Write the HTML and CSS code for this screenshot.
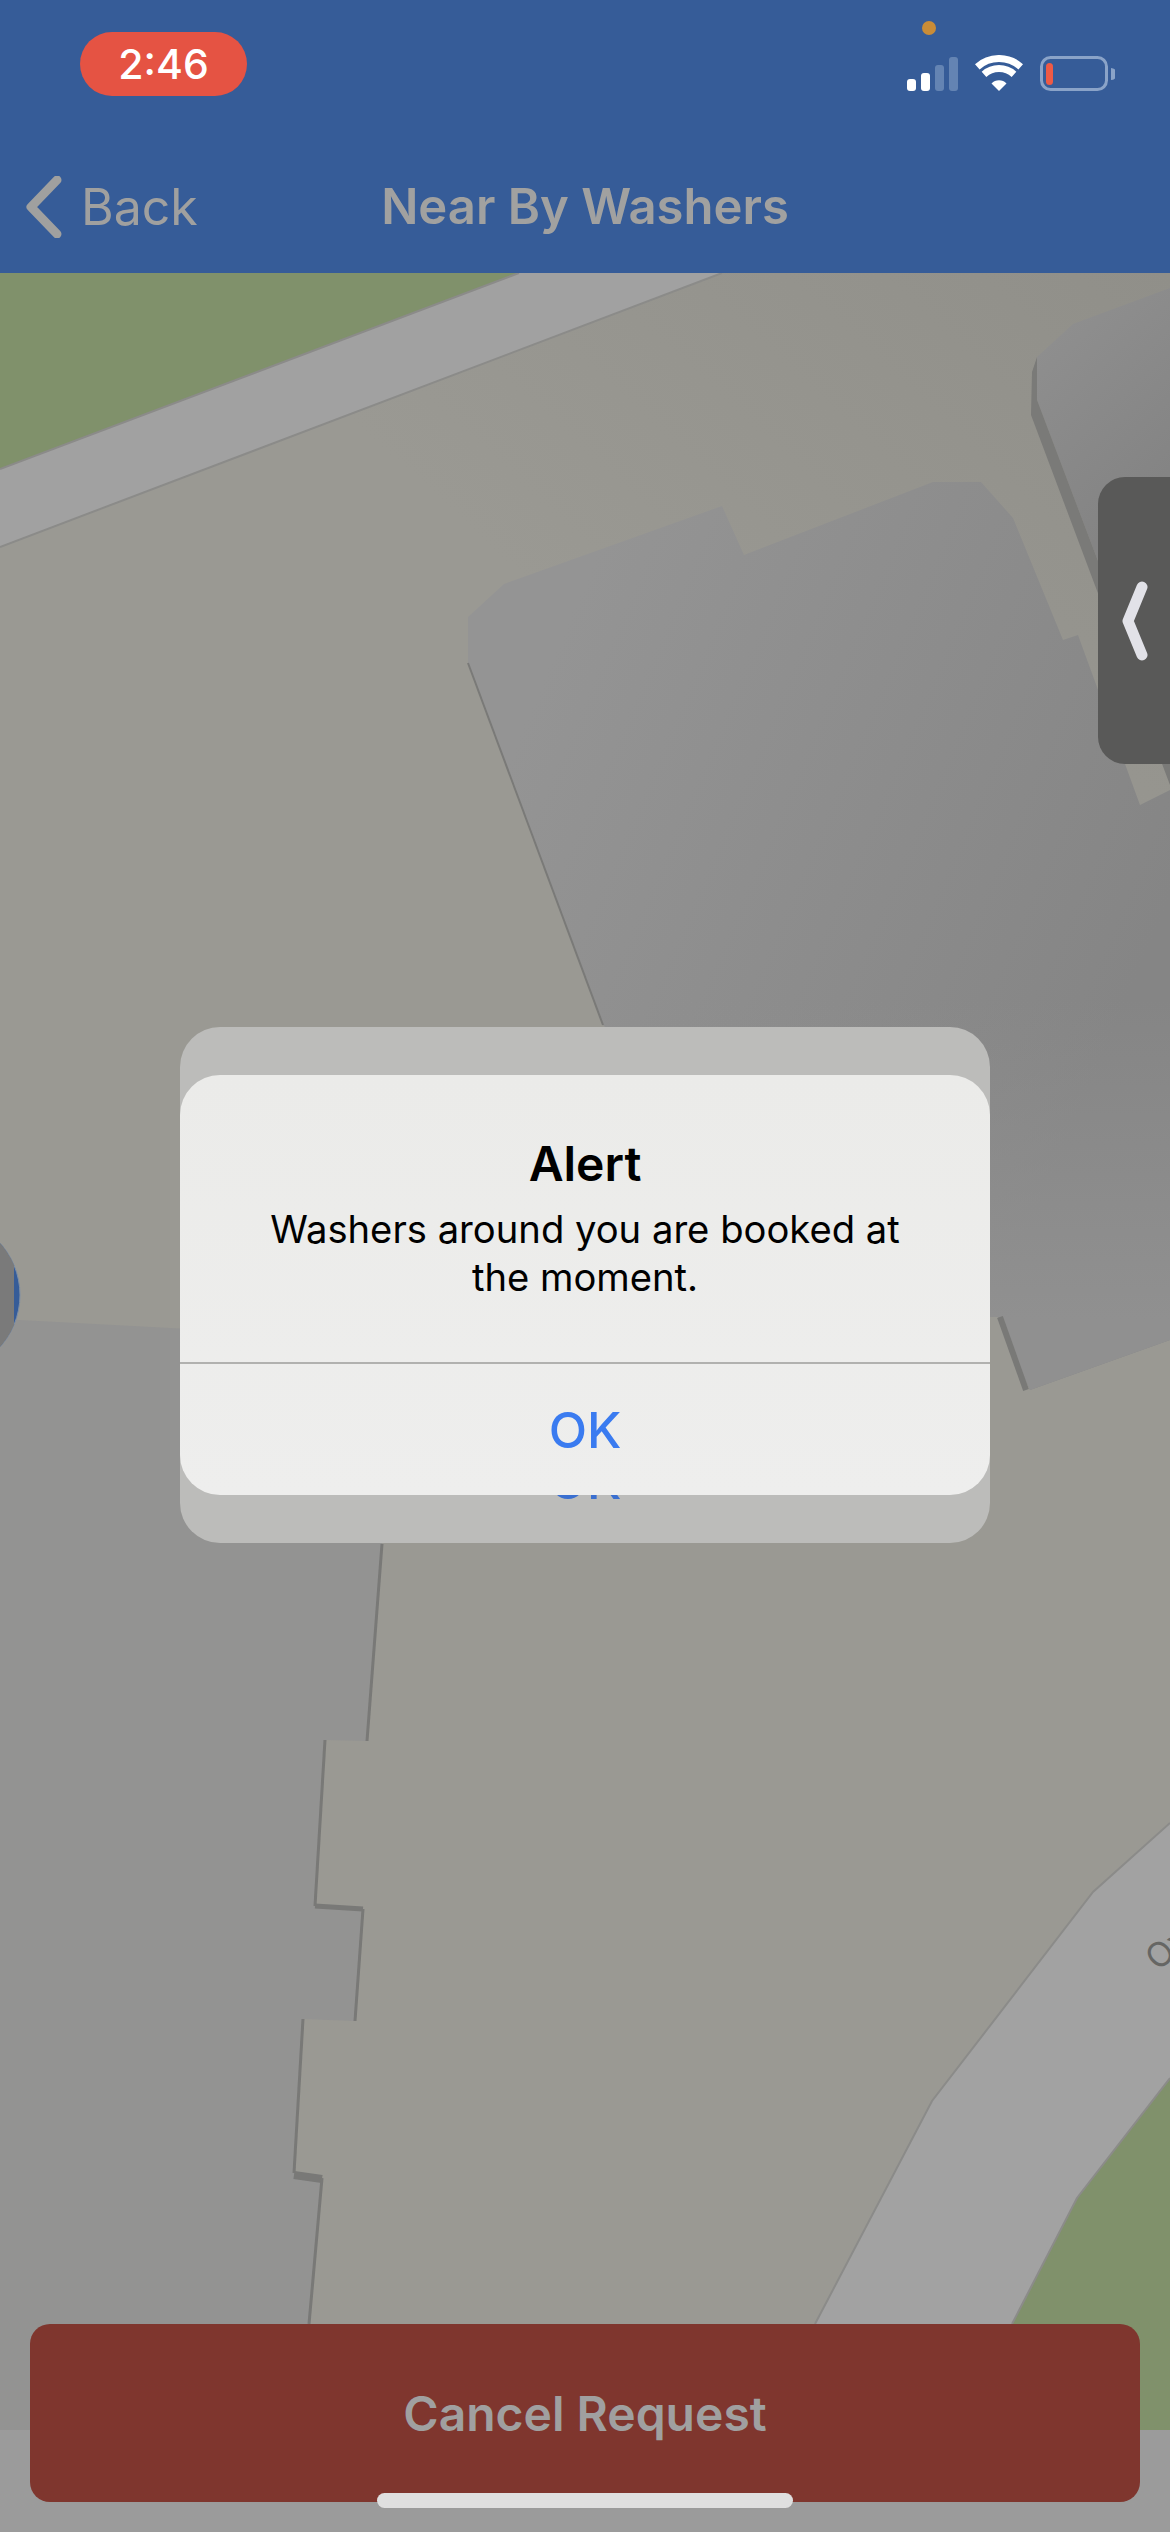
FILE: index.html
```html
<!DOCTYPE html>
<html lang="en">
<head>
<meta charset="utf-8">
<title>Near By Washers</title>
<link rel="stylesheet" href="styles.css">
</head>
<body>
<div class="page">
  <header class="header">
    <div class="status-bar">
      <div class="time-pill">2:46</div>
      <span class="camera-dot"></span>
      <div class="status-icons">
        <svg class="icon-signal" viewBox="0 0 51 34" width="51" height="34">
          <rect x="0" y="22" width="9" height="12" rx="3" fill="#fff"/>
          <rect x="14" y="16" width="9" height="18" rx="3" fill="#fff"/>
          <rect x="28" y="8" width="9" height="26" rx="3" fill="#6484b3"/>
          <rect x="42" y="0" width="9" height="34" rx="3" fill="#6484b3"/>
        </svg>
        <svg class="icon-wifi" viewBox="0 0 48 36" width="48" height="36">
          <path d="M2.3 11.8A32.5 32.5 0 0 1 45.7 11.8" fill="none" stroke="#fff" stroke-width="7"/>
          <path d="M9 19.3A22.5 22.5 0 0 1 39 19.3" fill="none" stroke="#fff" stroke-width="7"/>
          <path d="M24 36L16.5 28.5A10.5 10.5 0 0 1 31.5 28.5Z" fill="#fff"/>
        </svg>
        <svg class="icon-battery" viewBox="0 0 75 35" width="75" height="35">
          <rect x="1.5" y="1.5" width="65" height="32" rx="9" fill="none" stroke="#8aa3c8" stroke-width="3"/>
          <rect x="6" y="7" width="7" height="22" rx="3.5" fill="#ee5a45"/>
          <path d="M71 12A6 6 0 0 1 71 24Z" fill="#8aa3c8"/>
        </svg>
      </div>
    </div>
    <nav class="nav-bar">
      <div class="nav-back">
        <svg class="icon-back" viewBox="0 0 36 62" width="36" height="62">
          <path d="M31 4L5 31L31 58" fill="none" stroke="#a0a09f" stroke-width="9" stroke-linecap="round" stroke-linejoin="round"/>
        </svg>
        <span class="nav-back-label">Back</span>
      </div>
      <h1 class="nav-title">Near By Washers</h1>
    </nav>
  </header>

  <main class="map">
    <svg class="map-canvas" viewBox="0 273 1170 2157" preserveAspectRatio="none">
      <defs>
        <linearGradient id="base" gradientUnits="userSpaceOnUse" x1="1170" y1="273" x2="720" y2="760">
          <stop offset="0" stop-color="#908f89"/><stop offset="1" stop-color="#9a9993"/>
        </linearGradient>
        <linearGradient id="bldg" gradientUnits="userSpaceOnUse" x1="560" y1="640" x2="1170" y2="900">
          <stop offset="0" stop-color="#949494"/><stop offset="1" stop-color="#858585"/>
        </linearGradient>
        <linearGradient id="bldgLow" gradientUnits="userSpaceOnUse" x1="0" y1="1000" x2="0" y2="1320">
          <stop offset="0" stop-color="#909090" stop-opacity="0"/><stop offset="1" stop-color="#909090"/>
        </linearGradient>
        <linearGradient id="bldgTop" gradientUnits="userSpaceOnUse" x1="1037" y1="330" x2="1170" y2="470">
          <stop offset="0" stop-color="#8f8f8f"/><stop offset="1" stop-color="#848484"/>
        </linearGradient>
        <clipPath id="markerClip"><circle cx="-57.6" cy="1295" r="77.6"/></clipPath>
      </defs>
      <rect x="0" y="273" width="1170" height="2157" fill="url(#base)"/>
      <polygon points="0,273 519,273 0,469" fill="#80916b"/>
      <polygon points="519,273 722,273 0,547 0,469" fill="#a1a1a1"/>
      <path d="M0 469L519 273M0 547L722 273" fill="none" stroke="#8b8b89" stroke-width="2"/>

      <polygon points="1170,288 1073,324 1037,357 1037,400 1170,751" fill="url(#bldgTop)"/>
      <polygon points="1037,357 1032,372 1031,415 1170,785 1170,751 1037,400" fill="#7a7a78"/>

      <polygon id="b1" points="468,617 504,584 722,506 744,555 933,482 981,482 1013,518 1063,640 1078,635 1140,805 1170,790 1170,1340 1030,1390 998,1317 900,1317 603,1025 468,663" fill="url(#bldg)"/>
      <polygon points="1170,1000 1170,1340 1030,1390 998,1317 700,1317 600,1000" fill="url(#bldgLow)"/>
      <path d="M468 663L603 1025" fill="none" stroke="#7a7a78" stroke-width="2"/>
      <path d="M1000 1317L1026 1390" fill="none" stroke="#797977" stroke-width="6"/>

      <polygon points="0,1319 400,1340 382,1544 367,1741 325,1740 315,1906 363,1909 355,2021 303,2019 294,2173 322,2178 309,2324 305,2430 0,2430" fill="#939392"/>
      <path d="M382 1544L367 1741" fill="none" stroke="#797977" stroke-width="3"/>
      <path d="M325 1740L315 1906" fill="none" stroke="#797977" stroke-width="3"/>
      <path d="M315 1906L363 1909" fill="none" stroke="#797977" stroke-width="5"/>
      <path d="M363 1909L355 2021" fill="none" stroke="#797977" stroke-width="3"/>
      <path d="M303 2019L294 2173" fill="none" stroke="#797977" stroke-width="3"/>
      <path d="M294 2175L322 2179" fill="none" stroke="#797977" stroke-width="8"/>
      <path d="M322 2178L309 2324" fill="none" stroke="#797977" stroke-width="3"/>

      <polygon points="815,2324 932,2101 1093,1892 1170,1823 1170,2430 760,2430" fill="#a2a2a2"/>
      <polygon points="1012,2324 1077,2198 1170,2078 1170,2430 960,2430" fill="#80916b"/>
      <path d="M815 2324L932 2101L1093 1892L1170 1823M1012 2324L1077 2198L1170 2078" fill="none" stroke="#8b8b89" stroke-width="2"/>
      <text class="road-label" x="1145" y="1967" transform="rotate(-40 1158 1952)">Ox</text>

      <circle cx="-57.6" cy="1295" r="77.6" fill="#365c98" stroke="#7e8fa6" stroke-width="1"/>
      <rect x="0" y="1210" width="14" height="170" fill="#7a7a7a" clip-path="url(#markerClip)"/>
    </svg>
    <div class="drawer-handle">
      <svg viewBox="0 0 30 84" width="30" height="84">
        <path d="M23 8L9 42L23 76" fill="none" stroke="#e2e2e8" stroke-width="11" stroke-linecap="round" stroke-linejoin="round"/>
      </svg>
    </div>
  </main>

  <footer class="footer"></footer>

  <button class="cancel-button">Cancel Request</button>
  <div class="home-indicator"></div>

  <div class="alert-stack">
    <span class="ghost-ok">OK</span>
    <section class="alert">
      <div class="alert-body">
        <h2 class="alert-title">Alert</h2>
        <p class="alert-message">Washers around you are booked at the moment.</p>
      </div>
      <div class="alert-action">OK</div>
    </section>
  </div>
</div>
</body>
</html>
```

FILE: styles.css
```css
* { box-sizing: border-box; }
html, body { margin: 0; padding: 0; }
body { font-family: Inter, "Liberation Sans", sans-serif; background: #9b9b9b; }

.page {
  position: relative;
  width: 1170px;
  height: 2532px;
  overflow: hidden;
  display: flex;
  flex-direction: column;
}

.header { height: 273px; flex: none; background: #365c98; display: flex; flex-direction: column; }

.status-bar {
  position: relative;
  height: 96px;
  padding: 32px 55px 5px 80px;
  display: flex;
  justify-content: space-between;
  align-items: flex-start;
}
.time-pill {
  width: 167px;
  height: 64px;
  border-radius: 32px;
  background: #e55343;
  color: #fff;
  font-size: 41px;
  font-weight: 500;
  line-height: 64px;
  text-align: center;
}
.camera-dot {
  position: absolute;
  left: 922px;
  top: 21px;
  width: 14px;
  height: 14px;
  border-radius: 50%;
  background: #c98c37;
}
.status-icons { display: flex; align-items: flex-end; gap: 17px; align-self: flex-end; }
.status-icons svg { display: block; }

.nav-bar {
  flex: 1;
  display: grid;
  grid-template-columns: 1fr auto 1fr;
  align-items: center;
  padding: 45px 0 0 26px;
}
.nav-back { display: flex; align-items: center; gap: 19px; }
.icon-back { display: block; }
.nav-back-label { font-size: 50px; color: #a0a09f; line-height: 62px; }
.nav-title {
  grid-column: 2;
  margin: 0;
  font-size: 49px;
  font-weight: 600;
  color: #a1a1a0;
  line-height: 62px;
  position: relative;
  left: -13px;
}

.map { position: relative; flex: 1; min-height: 0; }
.map-canvas { display: block; width: 100%; height: 100%; }
.road-label { font-family: Inter, sans-serif; font-size: 34px; fill: #666664; }

.drawer-handle {
  position: absolute;
  right: 0;
  top: 204px;
  width: 72px;
  height: 287px;
  border-radius: 27px 0 0 27px;
  background: #595958;
  display: flex;
  align-items: center;
  padding-left: 21px;
}
.drawer-handle svg { display: block; }

.footer { height: 102px; flex: none; background: #9b9b9b; }

.cancel-button {
  position: absolute;
  left: 30px;
  top: 2324px;
  width: 1110px;
  height: 178px;
  border: 0;
  border-radius: 20px;
  background: #7f362e;
  color: #a0a0a0;
  font-family: inherit;
  font-size: 48px;
  font-weight: 600;
  padding: 0;
}
.home-indicator {
  position: absolute;
  left: 377px;
  top: 2493px;
  width: 416px;
  height: 15px;
  border-radius: 8px;
  background: #dfdfdf;
}

.alert-stack {
  position: absolute;
  left: 180px;
  top: 1027px;
  width: 810px;
  height: 516px;
  border-radius: 40px;
  background: #bcbcba;
  padding-top: 48px;
}
.ghost-ok {
  position: absolute;
  left: 0;
  right: 0;
  top: 425px;
  text-align: center;
  font-size: 50px;
  font-weight: 500;
  line-height: 58px;
  color: #3a6fd0;
}
.alert {
  position: relative;
  height: 420px;
  border-radius: 40px;
  background: linear-gradient(180deg, #ebebe9 0%, #eeeeed 100%);
  display: flex;
  flex-direction: column;
  overflow: hidden;
}
.alert-body {
  height: 289px;
  flex: none;
  border-bottom: 2px solid #b1b1af;
  padding: 59px 70px 0;
  text-align: center;
}
.alert-title { margin: 0; font-size: 48px; font-weight: 600; line-height: 60px; color: #000; }
.alert-message { margin: 11px 0 0; font-size: 38.2px; line-height: 48px; color: #000; }
.alert-action {
  flex: 1;
  display: flex;
  align-items: center;
  justify-content: center;
  font-size: 50px;
  font-weight: 500;
  color: #3a7bf0;
}
```
